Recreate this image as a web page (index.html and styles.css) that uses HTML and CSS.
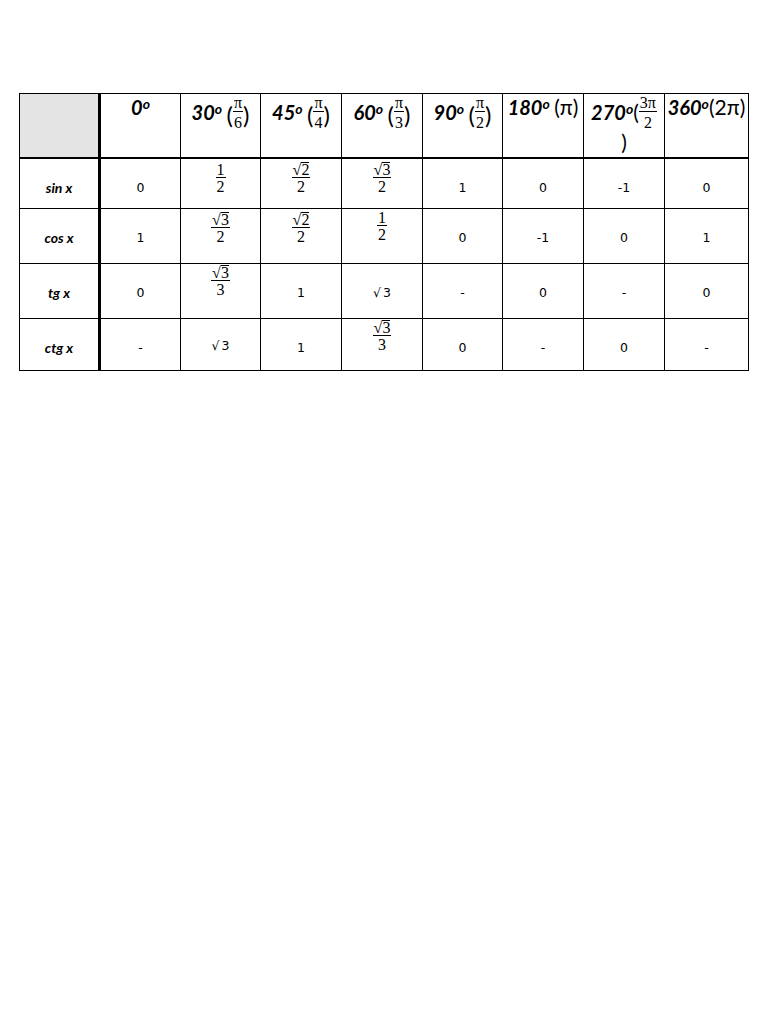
FILE: index.html
```html
<!DOCTYPE html>
<html lang="ru">
<head>
<meta charset="utf-8">
<title>Тригонометрическая таблица</title>
<link rel="stylesheet" href="styles.css">
</head>
<body>
<div class="page">
<table class="trig">
  <colgroup>
    <col class="c0"><col class="c1"><col class="c2"><col class="c3"><col class="c4"><col class="c5"><col class="c6"><col class="c7"><col class="c8">
  </colgroup>
  <tr class="r-head">
    <th class="corner"></th>
    <th>0<span class="deg">o</span></th>
    <th>30<span class="deg">o</span> <span class="par pb">(</span><span class="frac"><span class="num">π</span><span class="den">6</span></span><span class="par pb">)</span></th>
    <th>45<span class="deg">o</span> <span class="par pb">(</span><span class="frac"><span class="num">π</span><span class="den">4</span></span><span class="par pb">)</span></th>
    <th>60<span class="deg">o</span> <span class="par pb">(</span><span class="frac"><span class="num">π</span><span class="den">3</span></span><span class="par pb">)</span></th>
    <th>90<span class="deg">o</span> <span class="par pb">(</span><span class="frac"><span class="num">π</span><span class="den">2</span></span><span class="par pb">)</span></th>
    <th>180<span class="deg">o</span> <span class="par">(π)</span></th>
    <th>270<span class="deg">o</span><span class="par">(</span><span class="frac"><span class="num">3π</span><span class="den">2</span></span><span class="par wrap">)</span></th>
    <th>360<span class="deg">o</span><span class="par">(2π)</span></th>
  </tr>
  <tr class="r-sin">
    <td class="lbl">sin x</td>
    <td>0</td>
    <td class="f"><span class="frac"><span class="num">1</span><span class="den">2</span></span></td>
    <td class="f"><span class="frac"><span class="num">√<span class="ov">2</span></span><span class="den">2</span></span></td>
    <td class="f"><span class="frac"><span class="num">√<span class="ov">3</span></span><span class="den">2</span></span></td>
    <td>1</td>
    <td>0</td>
    <td>-1</td>
    <td>0</td>
  </tr>
  <tr class="r-cos">
    <td class="lbl">cos x</td>
    <td>1</td>
    <td class="f"><span class="frac"><span class="num">√<span class="ov">3</span></span><span class="den">2</span></span></td>
    <td class="f"><span class="frac"><span class="num">√<span class="ov">2</span></span><span class="den">2</span></span></td>
    <td class="f f-up"><span class="frac"><span class="num">1</span><span class="den">2</span></span></td>
    <td>0</td>
    <td>-1</td>
    <td>0</td>
    <td>1</td>
  </tr>
  <tr class="r-tg">
    <td class="lbl">tg x</td>
    <td>0</td>
    <td class="f"><span class="frac"><span class="num">√<span class="ov">3</span></span><span class="den">3</span></span></td>
    <td>1</td>
    <td><span class="sq">√</span>3</td>
    <td>-</td>
    <td>0</td>
    <td>-</td>
    <td>0</td>
  </tr>
  <tr class="r-ctg">
    <td class="lbl">ctg x</td>
    <td>-</td>
    <td class="hi"><span class="sq">√</span>3</td>
    <td>1</td>
    <td class="f"><span class="frac"><span class="num">√<span class="ov">3</span></span><span class="den">3</span></span></td>
    <td>0</td>
    <td>-</td>
    <td>0</td>
    <td>-</td>
  </tr>
</table>
</div>
</body>
</html>
```

FILE: styles.css
```css
html, body {
  margin: 0;
  padding: 0;
  background: #fff;
}

.page {
  padding: 93px 0 0 19px;
}

.trig {
  border-collapse: collapse;
  table-layout: fixed;
  width: 729px;
  color: #000;
}

.c0 { width: 80px; }
.c1 { width: 81px; }
.c2 { width: 80px; }
.c3 { width: 81px; }
.c4 { width: 81px; }
.c5 { width: 80px; }
.c6 { width: 81px; }
.c7 { width: 81px; }
.c8 { width: 84px; }

.trig th,
.trig td {
  border: 1px solid #000;
  padding: 0 2px;
  text-align: center;
  vertical-align: top;
}

.trig th:first-child,
.trig td:first-child {
  border-right: 3px solid #000;
}

.r-head th {
  border-bottom: 2px solid #000;
  height: 62px;
  padding-top: 1px;
  font-family: Lato, "Open Sans", "DejaVu Sans", sans-serif;
  font-weight: 700;
  font-style: italic;
  font-size: 20px;
  line-height: 24px;
  white-space: nowrap;
}

.r-head th.corner {
  background: #e4e4e4;
}

.deg {
  font-size: 14px;
  vertical-align: 6px;
  line-height: 1;
}

.par {
  font-weight: 400;
  font-style: normal;
  font-size: 21px;
}

.pb {
  font-size: 24px;
  line-height: 20px;
  vertical-align: -4px;
}

.wrap {
  display: block;
  line-height: 24px;
  margin-top: 0;
}

.frac {
  display: inline-block;
  text-align: center;
  font-family: "Liberation Serif", "DejaVu Serif", serif;
  font-weight: 400;
  font-style: normal;
  font-size: 16px;
}

.r-head .frac {
  vertical-align: -8px;
}

.frac .num {
  display: block;
  line-height: 15px;
  padding: 0 1px;
  border-bottom: 1px solid #000;
}

.r-head .frac .num {
  line-height: 16px;
}

.frac .den {
  display: block;
  line-height: 15px;
  padding-top: 1px;
}

.r-head .frac .den {
  padding-top: 3px;
}

.ov {
  display: inline-block;
  line-height: 13px;
  border-top: 1px solid #000;
}

.trig td {
  font-family: "DejaVu Sans", Verdana, sans-serif;
  font-size: 12.5px;
  line-height: 15px;
  padding-top: 21px;
}

.r-sin td { height: 28px; }
.r-cos td { height: 33px; }
.r-tg td { height: 33px; }
.r-ctg td { height: 30px; }

.trig td.lbl {
  font-family: Lato, "Open Sans", sans-serif;
  font-weight: 700;
  font-style: italic;
  font-size: 14px;
}

.trig td.f {
  padding-top: 3px;
}

.trig td.f .frac {
  vertical-align: top;
}

.trig td.f-up {
  padding-top: 1px;
}

.r-tg td.f,
.r-ctg td.f {
  padding-top: 1px;
}

.trig td.hi {
  padding-top: 19px;
}

.sq {
  margin-right: 2px;
}
```
